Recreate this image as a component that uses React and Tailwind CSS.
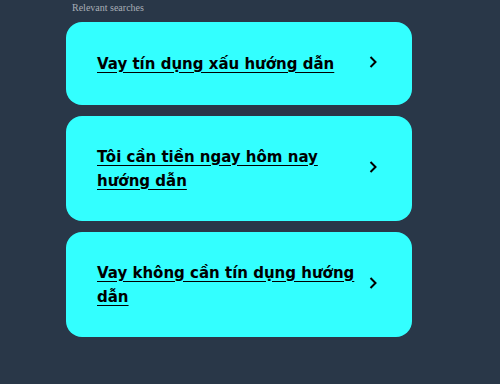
import React from 'react';

const searches = [
  'Vay tín dụng xấu hướng dẫn',
  'Tôi cần tiền ngay hôm nay hướng dẫn',
  'Vay không cần tín dụng hướng dẫn',
];

function Chevron() {
  return (
    <svg width="8" height="12" viewBox="0 0 8 12" className="shrink-0 -mt-[3px]">
      <polyline points="1.5,1 6.5,6 1.5,11" fill="none" stroke="#000" strokeWidth="2" />
    </svg>
  );
}

export default function App() {
  return (
    <div className="w-[500px] h-[384px] bg-[#293748] overflow-hidden">
      <div className="w-[346px] ml-[66px]">
        <div className="pl-[6px] h-[22px] text-[10px] text-[#a8aeb6] font-['Liberation_Serif',serif]">
          Relevant searches
        </div>
        <div className="flex flex-col gap-[11px]">
          {searches.map((s) => (
            <a
              key={s}
              href="#"
              className="flex items-center justify-between min-h-[83px] py-[28.5px] pl-[31px] pr-[35px] rounded-[16px] bg-[#33ffff] text-black"
            >
              <span className="w-[262px] text-[15px] leading-[24px] font-bold underline underline-offset-[3px] font-['DejaVu_Sans',sans-serif]">
                {s}
              </span>
              <Chevron />
            </a>
          ))}
        </div>
      </div>
    </div>
  );
}
